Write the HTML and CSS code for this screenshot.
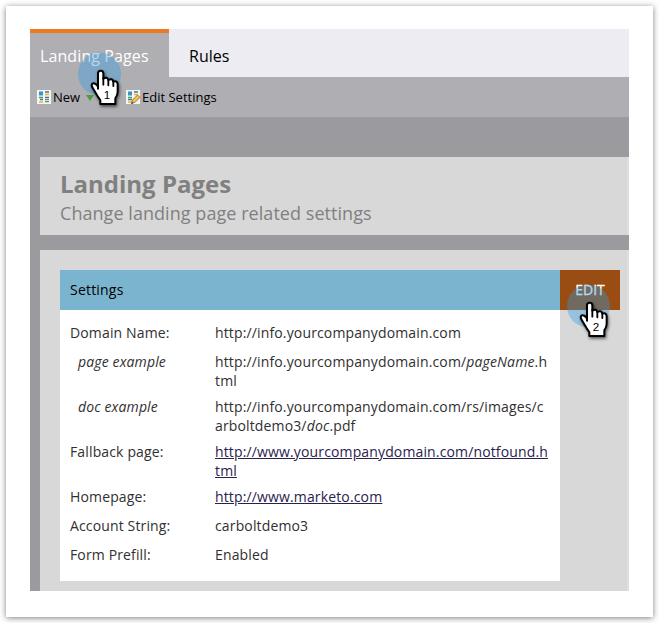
FILE: index.html
```html
<!DOCTYPE html>
<html lang="en">
<head>
<meta charset="utf-8">
<title>Landing Pages</title>
<link rel="stylesheet" href="styles.css">
</head>
<body>
<div class="frame">
  <div class="app">
    <nav class="tabs">
      <div class="tab active">Landing Pages</div>
      <div class="tab">Rules</div>
    </nav>
    <div class="toolbar">
      <div class="tool new">
        <svg class="icon" viewBox="0 0 14 14"><rect width="14" height="14" fill="#f4f6f6"/><path d="M2 1.5h4v4H2z" fill="#3d91c9"/><path d="M8 2h4M8 7.5h4M3 9.5h3" stroke="#3978aa" stroke-width="1.5"/><path d="M8 4.5h4M2 12h4" stroke="#e6b337" stroke-width="1.5"/><path d="M2 7.5h4M8 11.5h4" stroke="#4a9f5a" stroke-width="1.5"/><path d="M8 9.5h4" stroke="#ce645c"/></svg>
        <span>New</span>
        <svg class="caret" viewBox="0 0 8 7"><path d="M0 1h8L4 7z" fill="#4e9b3f"/></svg>
      </div>
      <div class="tool">
        <svg class="icon" viewBox="0 0 14 14"><rect width="14" height="14" fill="#f4f6f6"/><path d="M2 1.5h4v4H2z" fill="#3d91c9"/><path d="M8 2h4M2 9.5h4" stroke="#3978aa" stroke-width="1.5"/><path d="M8 4.5h4M2 12h4" stroke="#e6b337" stroke-width="1.5"/><path d="M2 7.5h4" stroke="#4a9f5a" stroke-width="1.5"/><path d="M5.5 13.5l1-3.5 5-5 2.5 2.3-5 5z" fill="#f3c44b" stroke="#80602f" stroke-width=".8"/><path d="M5.2 14l.8-2 1.2 1.2z" fill="#333"/></svg>
        <span>Edit Settings</span>
      </div>
    </div>
    <main class="content">
      <header class="heading">
        <h1>Landing Pages</h1>
        <p>Change landing page related settings</p>
      </header>
      <section class="panel">
        <div class="card">
          <h2>Settings</h2>
          <dl>
            <dt>Domain Name:</dt><dd>http://info.yourcompanydomain.com</dd>
            <dt class="sub">page example</dt><dd>http://info.yourcompanydomain.com/<i>pageName</i>.h<br>tml</dd>
            <dt class="sub">doc example</dt><dd>http://info.yourcompanydomain.com/rs/images/c<br>arboltdemo3/<i>doc</i>.pdf</dd>
            <dt>Fallback page:</dt><dd><a>http://www.yourcompanydomain.com/notfound.h<br>tml</a></dd>
            <dt>Homepage:</dt><dd><a>http://www.marketo.com</a></dd>
            <dt>Account String:</dt><dd>carboltdemo3</dd>
            <dt>Form Prefill:</dt><dd>Enabled</dd>
          </dl>
        </div>
        <div class="edit">EDIT</div>
      </section>
    </main>
  </div>
  <svg class="marker first" viewBox="15 0 180 180">
    <circle class="halo" cx="88.5" cy="72" r="64.5"/>
    <path class="hand" d="M84 116V69Q85 62 92 62Q99 62 100 69V86Q112 79 115 90Q127 83 130 95Q142 91 143 103V125Q143 134 136 145V162H91V151L82 137L67 112Q62 102 70 100Q76 99 84 109Z"/>
    <path class="lines" d="M100 84V104M115 89V106M130 95V108"/>
    <text x="111" y="147">1</text>
  </svg>
  <svg class="marker second" viewBox="15 0 180 180">
    <circle class="halo" cx="88.5" cy="72" r="64.5"/>
    <path class="hand" d="M84 116V69Q85 62 92 62Q99 62 100 69V86Q112 79 115 90Q127 83 130 95Q142 91 143 103V125Q143 134 136 145V162H91V151L82 137L67 112Q62 102 70 100Q76 99 84 109Z"/>
    <path class="lines" d="M100 84V104M115 89V106M130 95V108"/>
    <text x="111" y="147">2</text>
  </svg>
</div>
</body>
</html>
```
FILE: styles.css
```css
* { box-sizing: border-box; }
body {
  margin: 0;
  padding: 6px;
  height: 623px;
  overflow: hidden;
  background: #fff;
  font-family: "Open Sans", sans-serif;
  font-size: 14px;
  color: #303030;
}
.frame {
  position: relative;
  width: 647px;
  height: 611px;
  padding: 23px 24px;
  background: #fff;
  box-shadow: 0 1px 6px rgba(0, 0, 0, .5);
}
.app {
  display: flex;
  flex-direction: column;
  width: 599px;
  height: 562px;
  background: #9b9a9f;
}
.tabs {
  display: flex;
  height: 48px;
  background: #edecf3;
  font-size: 16px;
  color: #000;
}
.tab { padding: 16px 20px 0; line-height: 22px; }
.tab.active {
  width: 139px;
  padding: 12px 10px 0;
  border-top: 4px solid #ec7a22;
  background: #afaeb3;
  color: #fff;
  letter-spacing: .1px;
  white-space: nowrap;
}
.toolbar {
  display: flex;
  height: 40px;
  padding-left: 7px;
  background: #afaeb3;
  font-size: 13px;
  color: #000;
}
.tool { display: flex; align-items: center; gap: 2px; }
.tool.new { width: 89px; }
.icon { width: 14px; height: 14px; }
.caret { width: 8px; height: 7px; margin-left: 4px; }
.content { flex: 1; padding: 40px 0 0 10px; display: flex; flex-direction: column; gap: 15px; }
.heading {
  height: 78px;
  padding: 11px 20px 0;
  background: #d8d8d8;
  border-right: 2px solid #dedede;
  color: #808080;
}
h1 { margin: 0; font-size: 24px; line-height: 32px; font-weight: 700; }
.heading p { margin: 1px 0 0; font-size: 18px; line-height: 25px; letter-spacing: .05px; }
.panel {
  flex: 1;
  display: flex;
  align-items: flex-start;
  padding: 20px 0 0 20px;
  background: #d8d8d8;
  border-right: 2px solid #dedede;
}
.card { width: 500px; height: 311px; background: #fff; }
h2 {
  margin: 0;
  height: 40px;
  padding-left: 10px;
  background: #7bb4ce;
  color: #000;
  font-size: 14px;
  line-height: 40px;
  font-weight: 400;
  letter-spacing: .2px;
}
dl {
  display: grid;
  grid-template-columns: 145px 1fr;
  row-gap: 10px;
  margin: 0;
  padding: 13px 0 0 10px;
  line-height: 19px;
  letter-spacing: .14px;
}
dt, dd { margin: 0; white-space: nowrap; }
dd:has(br) { margin-bottom: -3px; }
.sub { padding-left: 8px; font-style: italic; }
a { color: #29224f; text-decoration: underline; }
.edit {
  width: 60px;
  height: 40px;
  background: #9a4d13;
  color: #fff;
  line-height: 40px;
  text-align: center;
  -webkit-text-stroke: .3px #fff;
}
.marker { position: absolute; width: 60px; height: 60px; overflow: visible; }
.first { left: 69px; top: 44px; }
.second { left: 558px; top: 276px; }
.halo { fill: #2d9be1; fill-opacity: .38; }
.hand {
  fill: #fff;
  stroke: #000;
  stroke-width: 6;
  stroke-linejoin: round;
  filter: drop-shadow(3px 5px 4px rgba(0, 0, 0, .6));
}
.lines { fill: none; stroke: #000; stroke-width: 5.5; stroke-linecap: round; }
.marker text { font: 35px "Liberation Sans", sans-serif; text-anchor: middle; fill: #000; }
```
